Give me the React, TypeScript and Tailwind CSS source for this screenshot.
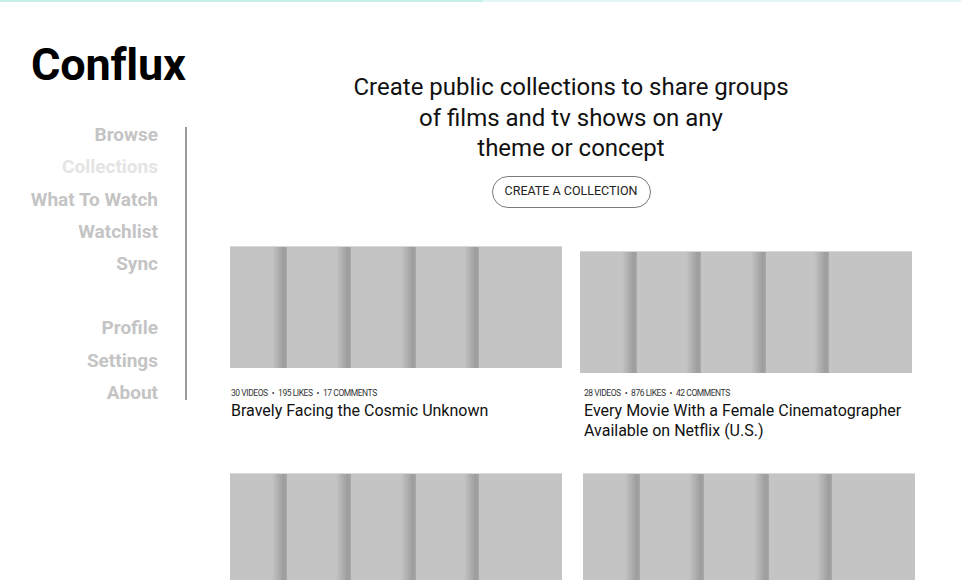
import React from "react";

const shadowSeg =
  "bg-[linear-gradient(90deg,#c4c4c4_0%,#c4c4c4_calc(100%_-_15px),#9c9c9c_calc(100%_-_3px),#a8a8a8_100%)]";

function Poster({ className = "" }: { className?: string }) {
  return (
    <div className={`flex h-[122px] w-[332px] overflow-hidden border-t border-[#d8d8d8] bg-[#c4c4c4] ${className}`}>
      <div className={`w-[57px] shrink-0 ${shadowSeg}`} />
      <div className={`w-[64px] shrink-0 ${shadowSeg}`} />
      <div className={`w-[65px] shrink-0 ${shadowSeg}`} />
      <div className={`w-[63px] shrink-0 ${shadowSeg}`} />
      <div className="flex-1" />
    </div>
  );
}

function Meta({ items }: { items: string[] }) {
  return (
    <div className="flex items-center text-[8.5px] leading-[12px] tracking-[-0.45px] text-[#333] uppercase">
      {items.map((it, i) => (
        <React.Fragment key={it}>
          {i > 0 && <span className="mx-[4px]">•</span>}
          <span>{it}</span>
        </React.Fragment>
      ))}
    </div>
  );
}

function Card({
  meta,
  title,
  shift,
}: {
  meta: string[];
  title: React.ReactNode;
  shift?: boolean;
}) {
  return (
    <div className="flex w-[332px] flex-col">
      <div className="h-[127px]">
        <Poster className={shift ? "mt-[5px]" : ""} />
      </div>
      <div className={`mt-[14px] ${shift ? "pl-[4px]" : "pl-[1px]"}`}>
        <Meta items={meta} />
        <div className="mt-[2px] text-[16px] leading-[20px] text-[#111]">{title}</div>
      </div>
    </div>
  );
}

export default function App() {
  const nav1 = ["Browse", "Collections", "What To Watch", "Watchlist", "Sync"];
  const nav2 = ["Profile", "Settings", "About"];
  return (
    <div className="relative h-[580px] w-[961px] overflow-hidden bg-white font-['Roboto',sans-serif]">
      <div className="flex h-[2px] w-full">
        <div className="h-full w-[483px] bg-[#c6efea]" />
        <div className="h-full flex-1 bg-[#e2f7f5]" />
      </div>
      <div className="flex">
        <aside className="w-[188px] shrink-0">
          <h1 className="pl-[31px] pt-[37px] text-[45px] leading-[52px] font-bold tracking-[-0.2px] text-black">
            Conflux
          </h1>
          <div className="mt-[36px] mr-[1px] flex h-[273px] flex-col border-r-2 border-[#9a9a9a]">
            <nav className="-mt-[8px] flex flex-col items-end pr-[27px] text-[19px] leading-[32.3px] font-bold text-[#c4c4c4]">
              {nav1.map((n) => (
                <span key={n} className={n === "Collections" ? "text-[#e4e4e4]" : ""}>
                  {n}
                </span>
              ))}
              <span className="h-[32px] shrink-0" />
              {nav2.map((n) => (
                <span key={n}>{n}</span>
              ))}
            </nav>
          </div>
        </aside>
        <main className="flex flex-1 flex-col pt-[70px]">
          <div className="flex flex-col items-center pr-[7px]">
            <p className="w-[460px] text-center text-[24px] leading-[30.5px] text-[#111]">
              Create public collections to share groups
              <br />
              of films and tv shows on any
              <br />
              theme or concept
            </p>
            <button className="mt-[12px] h-[32px] w-[159px] rounded-full border border-[#7a7a7a] text-[12.5px] text-[#222] uppercase">
              Create a collection
            </button>
          </div>
          <div className="mt-[38px] ml-[42px] flex gap-[18px]">
            <Card
              meta={["30 videos", "195 likes", "17 comments"]}
              title="Bravely Facing the Cosmic Unknown"
            />
            <Card
              shift
              meta={["28 videos", "876 likes", "42 comments"]}
              title={
                <>
                  Every Movie With a Female Cinematographer
                  <br />
                  Available on Netflix (U.S.)
                </>
              }
            />
          </div>
          <div className="mt-[32px] ml-[42px] flex gap-[21px]">
            <Poster />
            <Poster />
          </div>
        </main>
      </div>
    </div>
  );
}
